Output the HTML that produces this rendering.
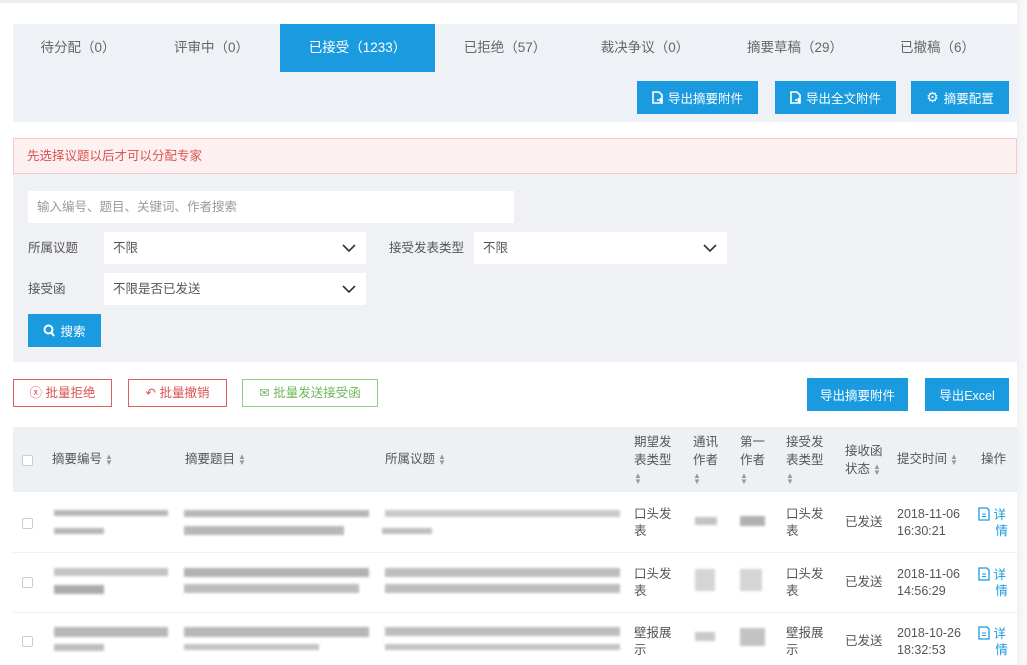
<!DOCTYPE html>
<html><head><meta charset="utf-8"><style>
*{margin:0;padding:0;box-sizing:border-box}
body{width:1027px;height:665px;overflow:hidden;background:#fff;font-family:"Liberation Sans","Noto Sans CJK SC",sans-serif;font-size:13px;color:#555;position:relative}
.a{position:absolute}
.top{left:0;top:0;width:1027px;height:3px;background:#eee}
.rs{left:1017px;top:0;width:10px;height:665px;background:linear-gradient(90deg,#f1f2f4,#fafafa)}
.panel{left:13px;top:24px;width:1004px;height:98px;background:#eef1f5}
.tab{top:24px;height:48px;line-height:48px;text-align:center;color:#666;font-size:13.5px}
.act{background:#1a9be0;color:#fff}
.btn{background:#1a9be0;color:#fff;text-align:center;font-size:12.5px;display:flex;align-items:center;justify-content:center;gap:5px}
.alert{left:13px;top:138px;width:1004px;height:36px;background:#fdf0f0;border:1px solid #f3c9c9;color:#d9534f;font-size:12.5px;line-height:34px;padding-left:13px}
.filt{left:13px;top:174px;width:1004px;height:188px;background:#eff1f4}
.inp{background:#fff;height:32px;line-height:32px;padding-left:9px;font-size:12.5px;color:#555}
.lbl{font-size:12.5px;color:#555;line-height:32px}
.chev{position:absolute;right:10px;top:9px}
.ob{height:28px;line-height:26px;text-align:center;font-size:12.5px;top:379px}
.th{left:13px;top:427px;width:1004px;height:65px;background:#eef1f4}
.hc{font-size:12.5px;color:#555;line-height:18px}
.sort{display:inline-block;font-size:8px;color:#999;line-height:6px;vertical-align:middle;margin-left:3px}
.cb{width:11px;height:11px;border:1px solid #ccc;border-radius:2px;background:#fff}
.row{left:13px;width:1004px;border-bottom:1px solid #f0f0f0}
.blur{filter:blur(1.2px);background:#888}
.cell{font-size:12.5px;color:#555;line-height:17px}
.det{color:#1a9be0;font-size:12.5px;line-height:16px}
</style></head><body>
<div class="a top"></div>
<div class="a rs"></div>
<div class="a panel"></div>
<div class="a tab" style="left:13px;width:130px">待分配（0）</div>
<div class="a tab" style="left:143px;width:137px">评审中（0）</div>
<div class="a tab act" style="left:280px;width:155px">已接受（1233）</div>
<div class="a tab" style="left:440px;width:130px">已拒绝（57）</div>
<div class="a tab" style="left:580px;width:130px">裁决争议（0）</div>
<div class="a tab" style="left:730px;width:130px">摘要草稿（29）</div>
<div class="a tab" style="left:880px;width:115px">已撤稿（6）</div>
<div class="a btn" style="left:637px;top:81px;width:121px;height:33px"><svg width="11" height="13" viewBox="0 0 11 13"><path d="M1 1h6l3 3v8H1z" fill="none" stroke="#fff" stroke-width="1.6"/><path d="M5 9h5M8 7l2 2-2 2" stroke="#fff" stroke-width="1.4" fill="none"/></svg>导出摘要附件</div>
<div class="a btn" style="left:775px;top:81px;width:121px;height:33px"><svg width="11" height="13" viewBox="0 0 11 13"><path d="M1 1h6l3 3v8H1z" fill="none" stroke="#fff" stroke-width="1.6"/><path d="M5 9h5M8 7l2 2-2 2" stroke="#fff" stroke-width="1.4" fill="none"/></svg>导出全文附件</div>
<div class="a btn" style="left:911px;top:81px;width:98px;height:33px"><span style="font-size:14px">⚙</span>摘要配置</div>
<div class="a alert">先选择议题以后才可以分配专家</div>
<div class="a filt"></div>
<div class="a inp" style="left:28px;top:191px;width:486px;color:#999">输入编号、题目、关键词、作者搜索</div>
<div class="a lbl" style="left:28px;top:232px">所属议题</div>
<div class="a inp" style="left:104px;top:232px;width:262px">不限<svg class="chev" width="14" height="14" viewBox="0 0 14 14"><path d="M1 4l6 6 6-6" fill="none" stroke="#333" stroke-width="1.6"/></svg></div>
<div class="a lbl" style="left:389px;top:232px">接受发表类型</div>
<div class="a inp" style="left:474px;top:232px;width:253px">不限<svg class="chev" width="14" height="14" viewBox="0 0 14 14"><path d="M1 4l6 6 6-6" fill="none" stroke="#333" stroke-width="1.6"/></svg></div>
<div class="a lbl" style="left:28px;top:273px">接受函</div>
<div class="a inp" style="left:104px;top:273px;width:262px">不限是否已发送<svg class="chev" width="14" height="14" viewBox="0 0 14 14"><path d="M1 4l6 6 6-6" fill="none" stroke="#333" stroke-width="1.6"/></svg></div>
<div class="a btn" style="left:28px;top:314px;width:73px;height:33px"><svg width="12" height="13" viewBox="0 0 12 13"><circle cx="5.5" cy="5.5" r="4" fill="none" stroke="#fff" stroke-width="2"/><path d="M8 8l3 4" stroke="#fff" stroke-width="2"/></svg>搜索</div>

<div class="a ob" style="left:13px;width:99px;border:1px solid #e06060;color:#d9534f">ⓧ 批量拒绝</div>
<div class="a ob" style="left:128px;width:99px;border:1px solid #e06060;color:#d9534f">↶ 批量撤销</div>
<div class="a ob" style="left:242px;width:136px;border:1px solid #8fcf7f;color:#6bb85a">✉ 批量发送接受函</div>
<div class="a btn" style="left:807px;top:378px;width:101px;height:33px">导出摘要附件</div>
<div class="a btn" style="left:925px;top:378px;width:84px;height:33px">导出Excel</div>

<div class="a th"></div>
<div class="a cb" style="left:22px;top:455px"></div>
<div class="a hc" style="left:52px;top:450px">摘要编号<span class="sort">▲<br>▼</span></div>
<div class="a hc" style="left:185px;top:450px">摘要题目<span class="sort">▲<br>▼</span></div>
<div class="a hc" style="left:385px;top:450px">所属议题<span class="sort">▲<br>▼</span></div>
<div class="a hc" style="left:634px;top:433px">期望发<br>表类型<br><span class="sort" style="margin:0">▲<br>▼</span></div>
<div class="a hc" style="left:693px;top:433px">通讯<br>作者<br><span class="sort" style="margin:0">▲<br>▼</span></div>
<div class="a hc" style="left:740px;top:433px">第一<br>作者<br><span class="sort" style="margin:0">▲<br>▼</span></div>
<div class="a hc" style="left:786px;top:433px">接受发<br>表类型<br><span class="sort" style="margin:0">▲<br>▼</span></div>
<div class="a hc" style="left:845px;top:442px">接收函<br>状态<span class="sort">▲<br>▼</span></div>
<div class="a hc" style="left:897px;top:450px">提交时间<span class="sort">▲<br>▼</span></div>
<div class="a hc" style="left:981px;top:450px">操作</div>

<div class="a row" style="top:492px;height:61px"></div>
<div class="a row" style="top:553px;height:60px"></div>

<div class="a cb" style="left:22px;top:518px"></div>
<div class="a blur" style="left:54px;top:510px;width:114px;height:6px;opacity:.6"></div>
<div class="a blur" style="left:54px;top:528px;width:50px;height:6px;opacity:.6"></div>
<div class="a blur" style="left:184px;top:510px;width:185px;height:7px;opacity:.6"></div>
<div class="a blur" style="left:184px;top:526px;width:160px;height:9px;opacity:.6"></div>
<div class="a blur" style="left:385px;top:510px;width:235px;height:7px;opacity:.45"></div>
<div class="a blur" style="left:382px;top:528px;width:50px;height:6px;opacity:.55"></div>
<div class="a cell" style="left:634px;top:506px">口头发<br>表</div>
<div class="a blur" style="left:695px;top:517px;width:22px;height:8px;opacity:.5"></div>
<div class="a blur" style="left:740px;top:516px;width:25px;height:10px;opacity:.65"></div>
<div class="a cell" style="left:786px;top:506px">口头发<br>表</div>
<div class="a cell" style="left:845px;top:514px">已发送</div>
<div class="a cell" style="left:897px;top:506px">2018-11-06<br>16:30:21</div>
<div class="a det" style="left:978px;top:507px"><svg width="12" height="14" viewBox="0 0 12 14" style="vertical-align:-2px"><path d="M1 1h8l2 2v10H1z" fill="none" stroke="#1a9be0" stroke-width="1.3"/><path d="M4 7h4M4 9.5h4" stroke="#1a9be0"/></svg> 详<br>&nbsp;&nbsp;&nbsp;&nbsp;&nbsp;情</div>

<div class="a cb" style="left:22px;top:577px"></div>
<div class="a blur" style="left:54px;top:568px;width:114px;height:8px;opacity:.5"></div>
<div class="a blur" style="left:54px;top:585px;width:50px;height:9px;opacity:.7"></div>
<div class="a blur" style="left:184px;top:568px;width:185px;height:9px;opacity:.65"></div>
<div class="a blur" style="left:184px;top:584px;width:175px;height:9px;opacity:.55"></div>
<div class="a blur" style="left:385px;top:568px;width:235px;height:9px;opacity:.55"></div>
<div class="a blur" style="left:385px;top:584px;width:235px;height:9px;opacity:.55"></div>
<div class="a cell" style="left:634px;top:566px">口头发<br>表</div>
<div class="a blur" style="left:695px;top:569px;width:20px;height:22px;opacity:.35"></div>
<div class="a blur" style="left:740px;top:569px;width:22px;height:22px;opacity:.35"></div>
<div class="a cell" style="left:786px;top:566px">口头发<br>表</div>
<div class="a cell" style="left:845px;top:574px">已发送</div>
<div class="a cell" style="left:897px;top:566px">2018-11-06<br>14:56:29</div>
<div class="a det" style="left:978px;top:567px"><svg width="12" height="14" viewBox="0 0 12 14" style="vertical-align:-2px"><path d="M1 1h8l2 2v10H1z" fill="none" stroke="#1a9be0" stroke-width="1.3"/><path d="M4 7h4M4 9.5h4" stroke="#1a9be0"/></svg> 详<br>&nbsp;&nbsp;&nbsp;&nbsp;&nbsp;情</div>

<div class="a cb" style="left:22px;top:636px"></div>
<div class="a blur" style="left:54px;top:627px;width:114px;height:10px;opacity:.6"></div>
<div class="a blur" style="left:54px;top:644px;width:50px;height:7px;opacity:.55"></div>
<div class="a blur" style="left:184px;top:627px;width:185px;height:10px;opacity:.6"></div>
<div class="a blur" style="left:184px;top:644px;width:135px;height:6px;opacity:.5"></div>
<div class="a blur" style="left:385px;top:627px;width:235px;height:9px;opacity:.55"></div>
<div class="a blur" style="left:385px;top:644px;width:235px;height:6px;opacity:.5"></div>
<div class="a cell" style="left:634px;top:625px">壁报展<br>示</div>
<div class="a blur" style="left:695px;top:632px;width:20px;height:9px;opacity:.45"></div>
<div class="a blur" style="left:740px;top:628px;width:25px;height:18px;opacity:.5"></div>
<div class="a cell" style="left:786px;top:625px">壁报展<br>示</div>
<div class="a cell" style="left:845px;top:633px">已发送</div>
<div class="a cell" style="left:897px;top:625px">2018-10-26<br>18:32:53</div>
<div class="a det" style="left:978px;top:626px"><svg width="12" height="14" viewBox="0 0 12 14" style="vertical-align:-2px"><path d="M1 1h8l2 2v10H1z" fill="none" stroke="#1a9be0" stroke-width="1.3"/><path d="M4 7h4M4 9.5h4" stroke="#1a9be0"/></svg> 详<br>&nbsp;&nbsp;&nbsp;&nbsp;&nbsp;情</div>
</body></html>
